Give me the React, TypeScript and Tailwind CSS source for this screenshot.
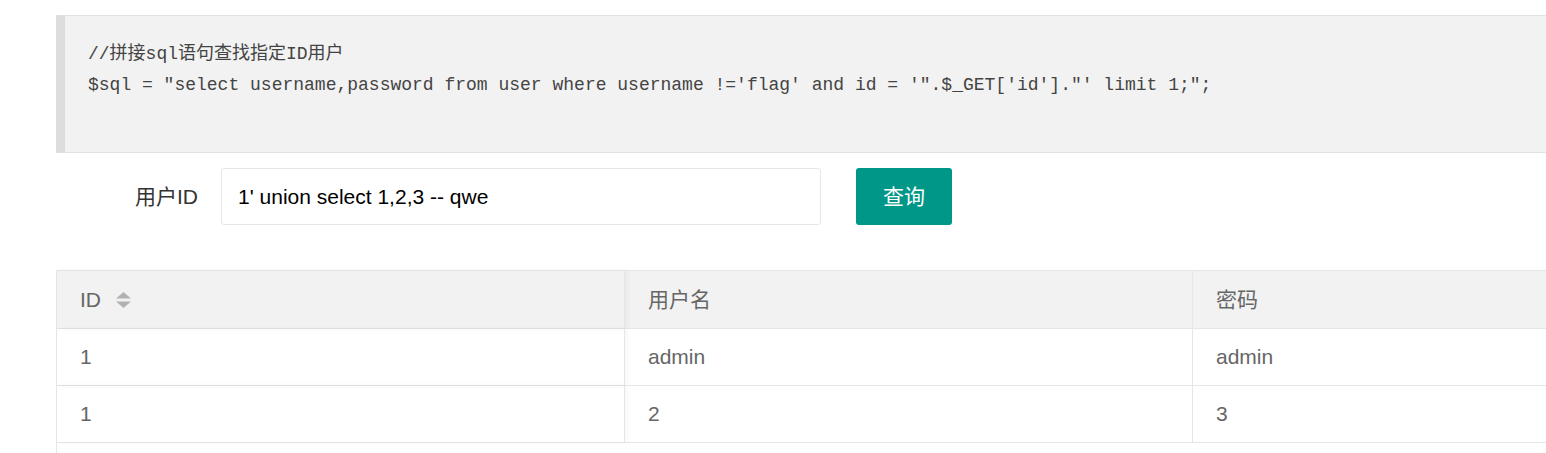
import React from "react";

const sans = "font-['Liberation_Sans','Noto_Sans_CJK_SC',sans-serif]";
const mono = "font-['Liberation_Mono','Noto_Sans_CJK_SC',monospace]";

const rows = [
  { id: "1", username: "admin", password: "admin" },
  { id: "1", username: "2", password: "3" },
];

// sort arrows next to the ID header
const SortIcon = () => (
  <svg width="15" height="16" viewBox="0 0 15 16" className="ml-[15px]">
    <path d="M7.5 0 L15 6.5 L0 6.5 Z" fill="#b2b2b2" />
    <path d="M0 9.5 L15 9.5 L7.5 16 Z" fill="#b2b2b2" />
  </svg>
);

export default function App() {
  return (
    <div className={`w-[1546px] h-[453px] overflow-hidden bg-white ${sans}`}>
      {/* Code block */}
      <div className="ml-[56px] mt-[15px] w-[1600px] border-y border-[#e2e2e2] border-l-[9px] border-l-[#dddddd] bg-[#f2f2f2] pl-[23px] pt-[23px] pb-[20px]">
        <div className={`${mono} text-[18px] leading-[31px] text-[#444] whitespace-pre`}>
          <div>//拼接sql语句查找指定ID用户</div>
          <div>$sql = "select username,password from user where username !='flag' and id = '".$_GET['id']."' limit 1;";</div>
          <div>&nbsp;</div>
        </div>
      </div>

      {/* Query form */}
      <div className="flex items-center ml-[56px] mt-[15px]">
        <label className="w-[165px] pr-[23px] text-right text-[21px] text-[#333]">用户ID</label>
        <input
          readOnly
          value="1' union select 1,2,3 -- qwe"
          className={`w-[600px] h-[57px] rounded-[3px] border border-[#e6e6e6] bg-white pl-[16px] text-[21px] text-black outline-none ${sans}`}
        />
        <button className="ml-[35px] h-[57px] px-[27px] rounded-[3px] bg-[#009688] text-[21px] text-white">
          查询
        </button>
      </div>

      {/* Result table */}
      <div className="ml-[56px] mt-[45px] w-[1704px] h-[200px] border-t border-l border-[#e6e6e6] text-[21px] text-[#666]">
        <div className="grid grid-cols-[568px_568px_568px] bg-[#f2f2f2] border-b border-[#e6e6e6]">
          <div className="relative z-10 h-[57px] flex items-center pl-[23px] border-r border-[#e6e6e6] shadow-[2px_0_6px_rgba(0,0,0,0.05)]">
            ID
            <SortIcon />
          </div>
          <div className="h-[57px] flex items-center pl-[23px] border-r border-[#e6e6e6]">用户名</div>
          <div className="h-[57px] flex items-center pl-[23px] border-r border-[#e6e6e6]">密码</div>
        </div>
        {rows.map((r, i) => (
          <div key={i} className="grid grid-cols-[568px_568px_568px] border-b border-[#e6e6e6] bg-white">
            <div className="relative z-10 h-[56px] flex items-center pl-[23px] border-r border-[#e6e6e6] shadow-[2px_0_6px_rgba(0,0,0,0.04)]">
              {r.id}
            </div>
            <div className="h-[56px] flex items-center pl-[23px] border-r border-[#e6e6e6]">{r.username}</div>
            <div className="h-[56px] flex items-center pl-[23px] border-r border-[#e6e6e6]">{r.password}</div>
          </div>
        ))}
      </div>
    </div>
  );
}
